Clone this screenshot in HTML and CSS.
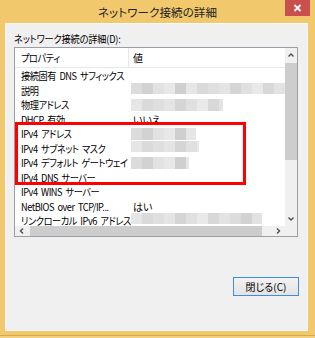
FILE: index.html
```html
<!DOCTYPE html>
<html lang="ja">
<head>
<meta charset="utf-8">
<link rel="stylesheet" href="styles.css">
</head>
<body>
<div class="window">
  <div class="titlebar">
    <span class="spacer"></span>
    <span class="title">ネットワーク接続の詳細</span>
    <span class="close">
      <svg width="9" height="8" viewBox="0 0 9 8"><path d="M1.5 1 L7.5 7 M7.5 1 L1.5 7" stroke="#fff" stroke-width="1.8" fill="none"/></svg>
    </span>
  </div>
  <div class="client">
    <div class="label"><span class="t">ネットワーク接続の詳細(D):</span></div>
    <div class="list">
      <div class="list-body">
        <div class="header">
          <div class="cell prop"><span class="t">プロパティ</span></div>
          <div class="cell val sep">値</div>
        </div>
        <div class="row"><div class="cell prop"><span class="t">接続固有 DNS サフィックス</span></div><div class="cell val"></div></div>
        <div class="row"><div class="cell prop"><span class="t">説明</span></div><div class="cell val"><span class="mosaic up" style="width:160px"></span></div></div>
        <div class="row"><div class="cell prop"><span class="t">物理アドレス</span></div><div class="cell val"><span class="mosaic alt" style="width:92px"></span></div></div>
        <div class="row"><div class="cell prop"><span class="t">DHCP 有効</span></div><div class="cell val">いいえ</div></div>
        <div class="row"><div class="cell prop"><span class="t">IPv4 アドレス</span></div><div class="cell val"><span class="mosaic" style="width:65px"></span></div></div>
        <div class="row"><div class="cell prop"><span class="t">IPv4 サブネット マスク</span></div><div class="cell val"><span class="mosaic alt up" style="width:68px"></span></div></div>
        <div class="row"><div class="cell prop"><span class="t">IPv4 デフォルト ゲートウェイ</span></div><div class="cell val"><span class="mosaic" style="width:58px"></span></div></div>
        <div class="row"><div class="cell prop"><span class="t">IPv4 DNS サーバー</span></div><div class="cell val"></div></div>
        <div class="row"><div class="cell prop"><span class="t">IPv4 WINS サーバー</span></div><div class="cell val"></div></div>
        <div class="row"><div class="cell prop"><span class="t">NetBIOS over TCP/IP...</span></div><div class="cell val">はい</div></div>
        <div class="row"><div class="cell prop"><span class="t">リンクローカル IPv6 アドレス</span></div><div class="cell val"><span class="mosaic alt up" style="width:131px"></span></div></div>
        <div class="highlight"></div>
      </div>
      <div class="vscroll">
        <svg class="arrow" width="12" height="14" viewBox="0 0 12 14"><path d="M3.5 8.5 L6 6 L8.5 8.5" stroke="#505050" stroke-width="1.4" fill="none"/></svg>
        <div class="vtrack"><div class="vthumb"></div></div>
        <svg class="arrow" width="12" height="14" viewBox="0 0 12 14"><path d="M3.5 5.5 L6 8 L8.5 5.5" stroke="#505050" stroke-width="1.4" fill="none"/></svg>
      </div>
      <div class="hscroll">
        <svg class="harrow" width="14" height="10" viewBox="0 0 14 10"><path d="M8 2.5 L5.5 5 L8 7.5" stroke="#505050" stroke-width="1.4" fill="none"/></svg>
        <div class="htrack"><div class="hthumb"></div></div>
        <svg class="harrow" width="14" height="10" viewBox="0 0 14 10"><path d="M6 2.5 L8.5 5 L6 7.5" stroke="#505050" stroke-width="1.4" fill="none"/></svg>
      </div>
      <div class="corner"></div>
    </div>
    <div class="buttons">
      <button class="btn">閉じる(C)</button>
    </div>
  </div>
</div>
</body>
</html>
```
FILE: styles.css
```css
* { box-sizing: border-box; }
html, body {
  margin: 0;
  padding: 0;
}
body {
  width: 315px;
  height: 338px;
  background: #f3cf7e;
  font-family: "Noto Sans CJK JP", "Noto Sans", sans-serif;
  font-feature-settings: "palt";
  font-size: 10px;
  color: #000;
  overflow: hidden;
}
.window {
  height: 336px;
  background: #f1c86c;
  border-bottom: 1px solid #d9a849;
  padding: 0 7px 4px 5px;
  display: flex;
  flex-direction: column;
}
.titlebar {
  height: 23px;
  display: grid;
  grid-template-columns: 25px 1fr 25px;
  align-items: start;
  margin-right: -2px;
}
.title {
  text-align: center;
  font-size: 11.5px;
  line-height: 24px;
  color: #222;
  letter-spacing: 0.1px;
}
.close {
  height: 16px;
  background: #c9504c;
  display: flex;
  align-items: center;
  justify-content: center;
}
.close svg { display: block; }
.client {
  flex: 1;
  background: #f0f0f0;
  border: 1px solid #fafafa;
  padding: 8px 9px 0 8px;
  display: flex;
  flex-direction: column;
}
.t {
  display: inline-block;
  white-space: nowrap;
  transform: scaleX(0.92);
  transform-origin: 0 50%;
}
.label {
  line-height: 14px;
  height: 15px;
  letter-spacing: -0.2px;
}
.list {
  height: 190px;
  border: 1px solid #9a9ea6;
  background: #fff;
  display: grid;
  grid-template-columns: 1fr 12px;
  grid-template-rows: 1fr 10px;
}
.list-body {
  position: relative;
  overflow: hidden;
}
.header, .row {
  display: grid;
  grid-template-columns: 113px 1fr;
}
.header {
  height: 20px;
  border-bottom: 1px solid #e4e8ee;
}
.row { height: 14.5px; }
.cell {
  display: flex;
  align-items: center;
  white-space: nowrap;
}
.prop {
  padding-left: 6px;
  letter-spacing: -0.5px;
  word-spacing: 2px;
}
.val {
  padding-left: 5px;
  overflow: hidden;
}
.sep { border-left: 1px solid #e8e8e8; padding-left: 4px; }
.header .cell { padding-bottom: 1px; }
.mosaic {
  display: block;
  height: 12px;
  margin-left: -2px;
  flex: none;
  background-image: linear-gradient(90deg,
    #dcdcdc 0 11px, #d2d2d2 11px 22px, #e2e2e2 22px 33px, #e8e8e8 33px 44px,
    #cfcfcf 44px 55px, #e6e6e6 55px 66px, #dadada 66px 77px, #dfdfdf 77px 88px,
    #e4e4e4 88px 99px, #d5d5d5 99px 110px, #e0e0e0 110px 121px, #e9e9e9 121px 132px,
    #d8d8d8 132px 143px, #e3e3e3 143px 154px);
  background-size: 154px 100%;
}
.mosaic.alt {
  background-position: -55px 0;
}
.mosaic.up { margin-bottom: 5px; }
.highlight {
  position: absolute;
  left: 0;
  top: 74px;
  width: 231px;
  height: 63px;
  border: 3px solid #ff0000;
}
.vscroll {
  grid-row: 1 / 2;
  grid-column: 2;
  background: #f0f0f0;
  display: flex;
  flex-direction: column;
}
.arrow { display: block; flex: none; }
.vtrack {
  flex: 1;
  padding-top: 1px;
}
.vthumb {
  height: 97px;
  background: #cdcdcd;
}
.hscroll {
  grid-row: 2;
  grid-column: 1;
  background: #f0f0f0;
  display: flex;
  align-items: stretch;
}
.harrow { display: block; flex: none; }
.htrack { flex: 1; padding-left: 1px; }
.hthumb {
  width: 232px;
  height: 100%;
  background: #cdcdcd;
}
.corner {
  grid-row: 2;
  grid-column: 2;
  background: #f0f0f0;
}
.buttons {
  display: flex;
  justify-content: flex-end;
  margin-top: 40px;
  margin-right: -1px;
}
.btn {
  width: 66px;
  height: 19px;
  border: 1px solid #3d8ee0;
  background: linear-gradient(#f2f2f2, #e3e3e3);
  font-family: "Noto Sans CJK JP", "Noto Sans", sans-serif;
  font-feature-settings: "palt";
  font-size: 10px;
  color: #000;
  padding: 0;
  line-height: 17px;
}
```
